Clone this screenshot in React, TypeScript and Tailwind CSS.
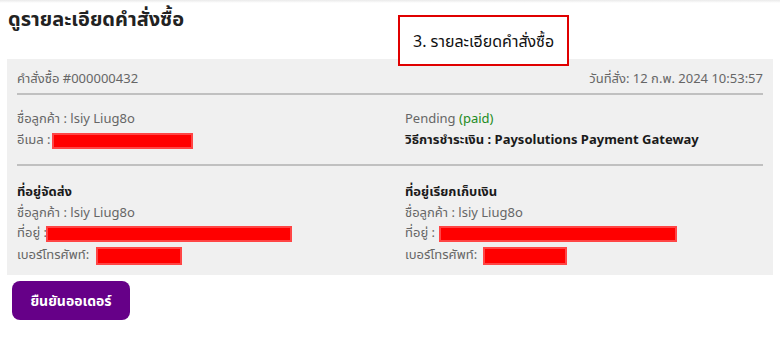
import React from "react";

const font = { fontFamily: '"Noto Sans", "Noto Sans Thai", "DejaVu Sans", sans-serif' };

function Redacted({ w, h = 16 }: { w: number; h?: number }) {
  return (
    <span
      className="inline-block align-middle bg-[#ff0000] border-2 border-[#ff4545]"
      style={{ width: w, height: h }}
    />
  );
}

function Address({
  title,
  addrW,
  phoneW,
  addrGap,
  phoneGap,
}: {
  title: string;
  addrW: number;
  phoneW: number;
  addrGap: string;
  phoneGap: string;
}) {
  return (
    <div className="flex flex-col">
      <div className="text-[13px] font-bold text-[#1a1a1a] leading-[22px]">{title}</div>
      <div className="text-[13px] text-[#666] leading-[20px]">ชื่อลูกค้า : lsiy Liug8o</div>
      <div className="text-[13px] text-[#666] leading-[20px] flex items-center">
        ที่อยู่ :<span className={addrGap}><Redacted w={addrW} /></span>
      </div>
      <div className="text-[13px] text-[#666] leading-[24px] flex items-center">
        เบอร์โทรศัพท์:<span className={phoneGap}><Redacted w={phoneW} h={18} /></span>
      </div>
    </div>
  );
}

export default function App() {
  return (
    <div className="relative w-[780px] h-[338px] bg-white overflow-hidden" style={font}>
      <div className="absolute inset-x-0 top-0 h-[3px] bg-gradient-to-b from-[#eaeaea] to-white" />
      <h1 className="pl-[8px] pt-[5px] text-[20px] font-bold text-[#222] leading-[28px]">
        ดูรายละเอียดคำสั่งซื้อ
      </h1>

      <div className="ml-[7px] mt-[26px] w-[766px] bg-[#f0f0f0] px-[10px] pb-[9px]">
        <div className="flex justify-between items-end pt-[9px] pb-[5px] border-b-2 border-[#c0c0c0] text-[13px] text-[#666] leading-[20px]">
          <span>คำสั่งซื้อ #000000432</span>
          <span>วันที่สั่ง: 12 ก.พ. 2024 10:53:57</span>
        </div>

        <div className="grid grid-cols-2 pt-[13px] pb-[14px] border-b-2 border-[#c0c0c0]">
          <div className="flex flex-col">
            <div className="text-[13px] text-[#666] leading-[21px]">ชื่อลูกค้า : lsiy Liug8o</div>
            <div className="text-[13px] text-[#666] leading-[21px] flex items-center">
              อีเมล :<span className="ml-[1px]"><Redacted w={141} /></span>
            </div>
          </div>
          <div className="flex flex-col pl-[15px]">
            <div className="text-[13px] text-[#666] leading-[21px]">
              Pending <span className="text-[#228b22]">(paid)</span>
            </div>
            <div className="text-[13px] font-bold text-[#1a1a1a] leading-[21px]">
              วิธีการชำระเงิน : Paysolutions Payment Gateway
            </div>
          </div>
        </div>

        <div className="grid grid-cols-2 pt-[14px]">
          <Address title="ที่อยู่จัดส่ง" addrW={246} phoneW={86} addrGap="ml-[-1px]" phoneGap="ml-[7px]" />
          <div className="pl-[15px]">
            <Address title="ที่อยู่เรียกเก็บเงิน" addrW={238} phoneW={84} addrGap="ml-[4px]" phoneGap="ml-[6px]" />
          </div>
        </div>
      </div>

      <button className="ml-[12px] mt-[6px] w-[118px] h-[39px] rounded-[8px] bg-[#660088] text-white text-[14px] font-bold">
        ยืนยันออเดอร์
      </button>

      <div className="absolute left-[398px] top-[15px] w-[171px] h-[51px] bg-white border-2 border-[#e00000] flex items-center pl-[13px] text-[16px] text-[#111]">
        3. รายละเอียดคำสั่งซื้อ
      </div>
    </div>
  );
}
